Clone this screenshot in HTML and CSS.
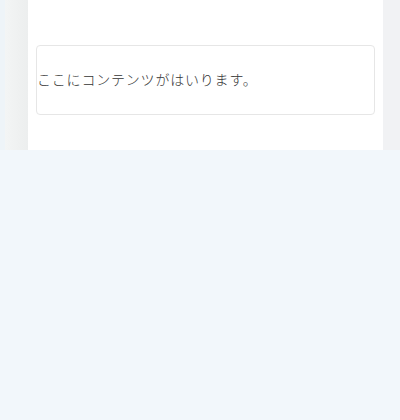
FILE: index.html
```html
<!DOCTYPE html>
<html lang="ja">
<head>
<meta charset="utf-8">
<link rel="stylesheet" href="styles.css">
</head>
<body>
<div class="frame">
  <div class="edge"></div>
  <div class="shade"></div>
  <main class="panel">
    <div class="card">
      <p class="text">ここにコンテンツがはいります。</p>
    </div>
  </main>
  <div class="side"></div>
</div>
</body>
</html>
```
FILE: styles.css
```css
html, body {
  margin: 0;
  padding: 0;
  background: #f2f7fb;
}
.frame {
  display: flex;
  height: 150px;
}
.edge {
  width: 5px;
  background: #eef4f8;
}
.shade {
  width: 23px;
  background: linear-gradient(to right, #f3f5f5, #eceeee);
}
.panel {
  width: 355px;
  background: #ffffff;
  padding: 45px 8px 0 8px;
  box-sizing: border-box;
}
.side {
  flex: 1;
  background: #f1f2f4;
}
.card {
  border: 1px solid #e6e6e6;
  border-radius: 4px;
  height: 70px;
  box-sizing: border-box;
  display: flex;
  align-items: center;
}
.text {
  margin: 0 0 2px 0;
  font-family: "Noto Sans CJK JP", sans-serif;
  font-weight: 300;
  font-size: 14px;
  letter-spacing: 0.8px;
  color: #333333;
}
```
